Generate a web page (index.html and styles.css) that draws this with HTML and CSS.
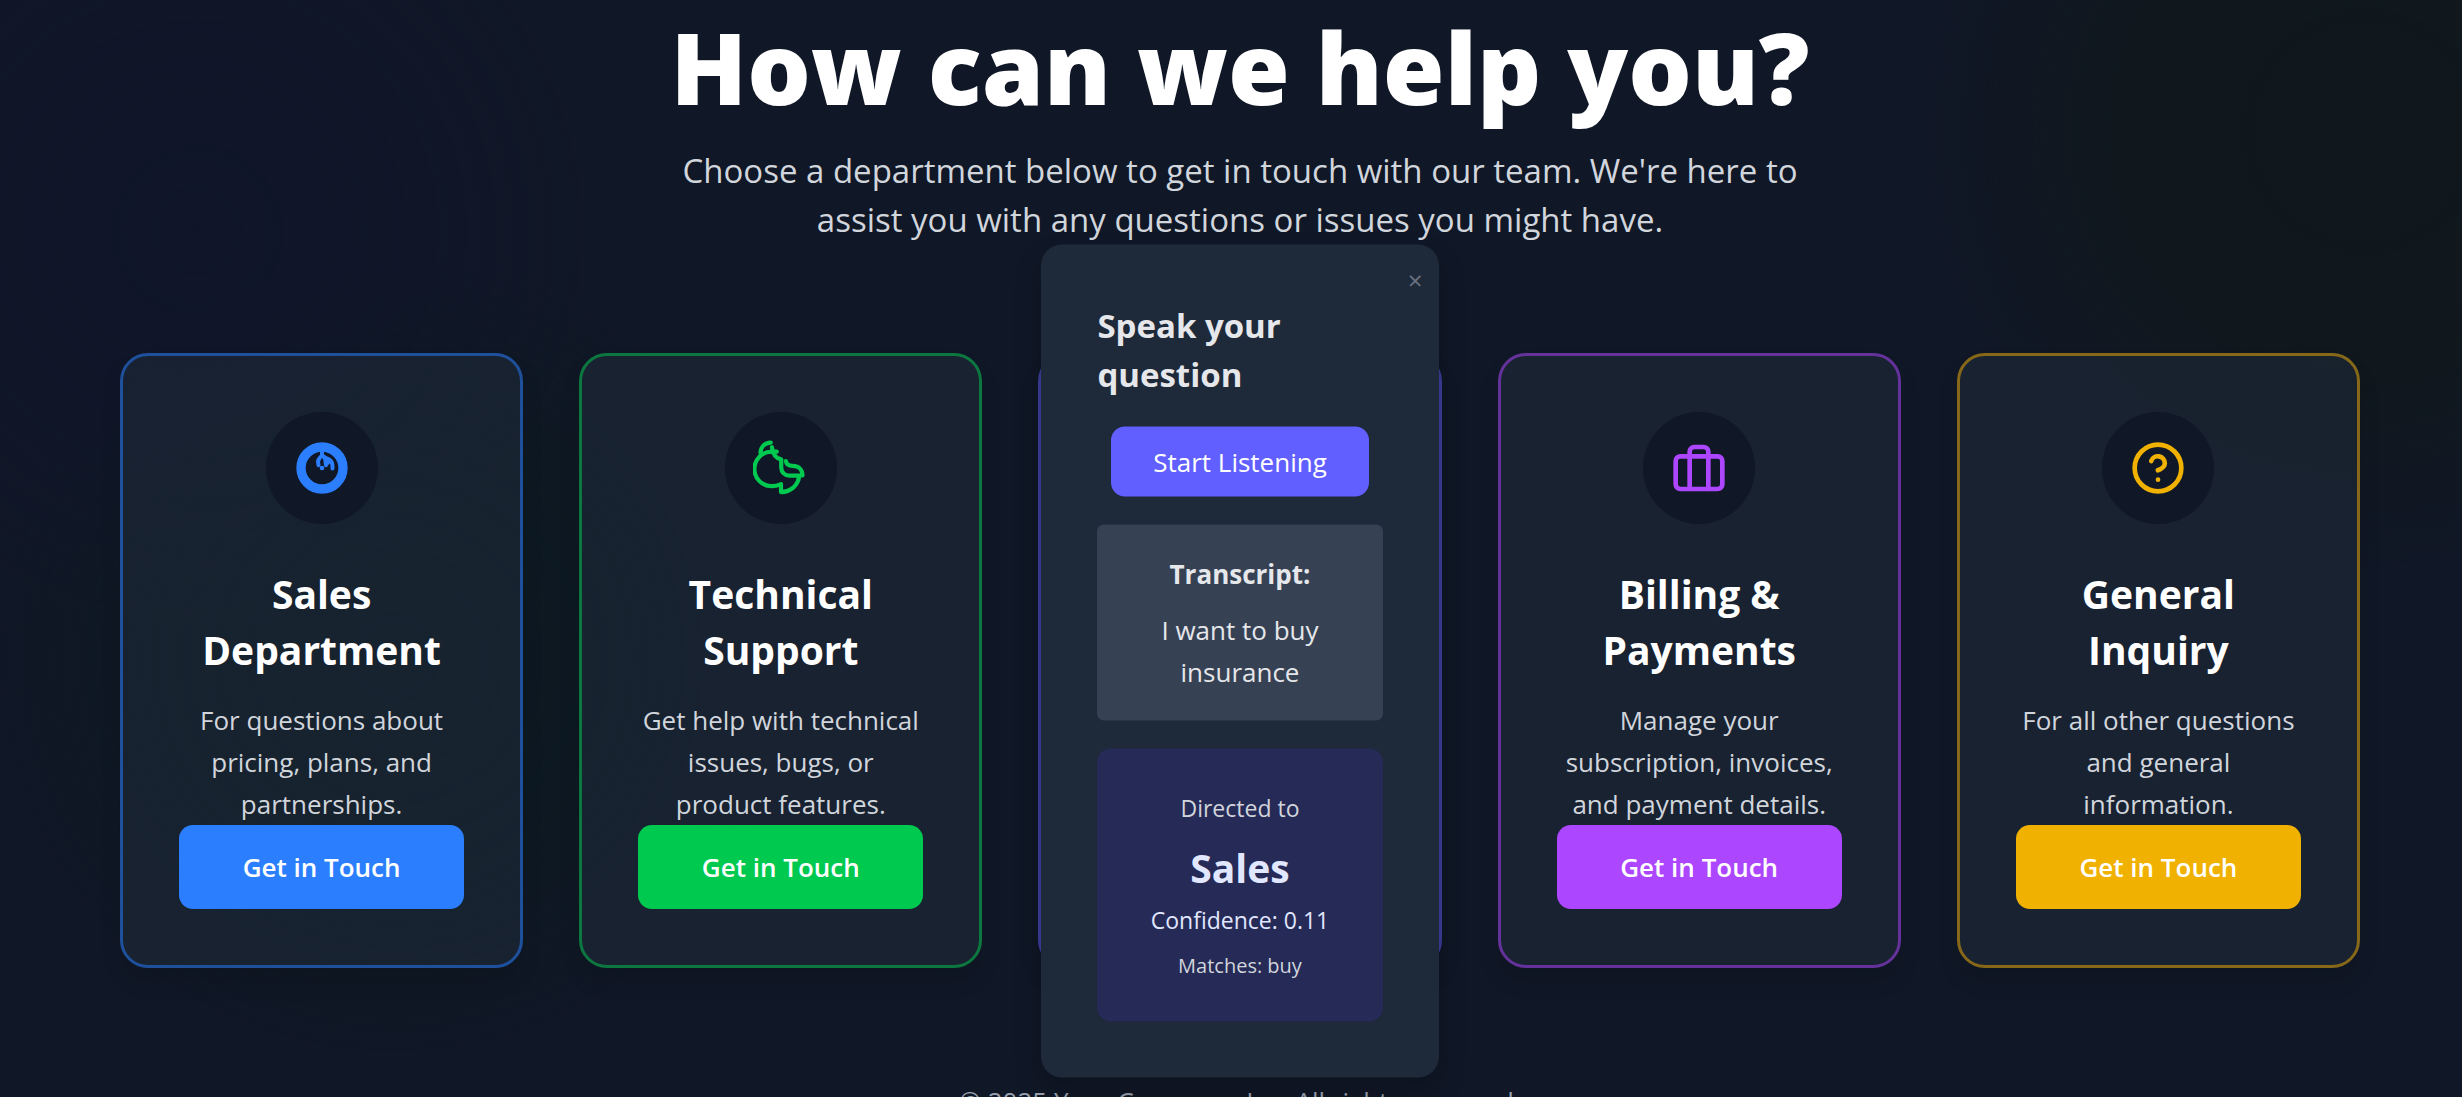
FILE: index.html
```html
<!DOCTYPE html>
<html lang="en">
<head>
<meta charset="utf-8">
<meta name="viewport" content="width=device-width, initial-scale=1">
<title>How can we help you?</title>
<link rel="stylesheet" href="styles.css">
</head>
<body>
<div class="page">
  <header class="intro">
    <h1 class="intro-title">How can we help you?</h1>
    <p class="intro-text">Choose a department below to get in touch with our team. We're here to assist you with any questions or issues you might have.</p>
  </header>

  <main class="cards">
    <section class="card card-blue">
      <div class="badge">
        <svg class="icon" viewBox="0 0 24 24" aria-hidden="true">
          <circle cx="12" cy="12" r="9" stroke-width="4"/>
          <path stroke-width="1.7" d="M12 5v1.6c-1 .9-1.600 1.700-1.700 2.600l.2 1.600M12 6.600c1 .6 1.600 1.600 1.500 2.600l.2 1.600M13 7.200c1.300 1.300 3.700.6 3.500 5M13.800 10.400l.8-.8"/>
          <circle class="dot" cx="12" cy="12" r="1"/>
        </svg>
      </div>
      <h2 class="card-title">Sales Department</h2>
      <p class="card-text">For questions about pricing, plans, and partnerships.</p>
      <button class="card-button" type="button">Get in Touch</button>
    </section>

    <section class="card card-green">
      <div class="badge">
        <svg class="icon" viewBox="0 0 24 24" aria-hidden="true">
          <path stroke-width="1.8" d="M7.600 1.100C5 1.200 3.200 3 3.200 5.600M10.200 5H8a7.400 7.400 0 0 0 0 14.800c1.500 0 2.600-.3 4-.9v3.400c4.200 0 7.500-3 7.800-7h-4.200c-2 0-3.500-1.500-3.500-3.500V8.300c-2-.3-3.600-2.100-4-5.200M14.100 9c.2 1.600 1.200 2.100 2.800 2.100 2.700 0 4.300 1.500 4.300 4.100"/>
        </svg>
      </div>
      <h2 class="card-title">Technical Support</h2>
      <p class="card-text">Get help with technical issues, bugs, or product features.</p>
      <button class="card-button" type="button">Get in Touch</button>
    </section>

    <section class="card card-indigo">
      <div class="dialog" role="dialog" aria-labelledby="dialog-title">
        <button class="dialog-close" type="button" aria-label="Close">×</button>
        <h2 class="dialog-title" id="dialog-title">Speak your question</h2>
        <button class="listen-button" type="button">Start Listening</button>
        <div class="transcript">
          <h3 class="transcript-title">Transcript:</h3>
          <p class="transcript-text">I want to buy insurance</p>
        </div>
        <div class="result">
          <p class="result-label">Directed to</p>
          <p class="result-name">Sales</p>
          <p class="result-score">Confidence: 0.11</p>
          <p class="result-matches">Matches: buy</p>
        </div>
      </div>
    </section>

    <section class="card card-purple">
      <div class="badge">
        <svg class="icon" viewBox="0 0 24 24" aria-hidden="true">
          <rect x="2" y="7" width="20" height="14" rx="2"/>
          <path d="M16 21V5a2 2 0 0 0-2-2h-4a2 2 0 0 0-2 2v16"/>
        </svg>
      </div>
      <h2 class="card-title">Billing &amp; Payments</h2>
      <p class="card-text">Manage your subscription, invoices, and payment details.</p>
      <button class="card-button" type="button">Get in Touch</button>
    </section>

    <section class="card card-yellow">
      <div class="badge">
        <svg class="icon" viewBox="0 0 24 24" aria-hidden="true">
          <circle cx="12" cy="12" r="10"/>
          <path d="M9.090 9a3 3 0 0 1 5.830 1c0 2-3 3-3 3M12 17h.01"/>
        </svg>
      </div>
      <h2 class="card-title">General Inquiry</h2>
      <p class="card-text">For all other questions and general information.</p>
      <button class="card-button" type="button">Get in Touch</button>
    </section>
  </main>

  <footer class="footer">© 2025 Your Company, Inc. All rights reserved.</footer>
</div>
</body>
</html>
```
FILE: styles.css
```css
* {
  box-sizing: border-box;
  margin: 0;
  padding: 0;
}

html {
  height: 100%;
  overflow: hidden;
}

body {
  min-height: 100%;
  background:
    radial-gradient(circle at 8% 21%, rgba(16, 20, 44, 0.6) 0, transparent 400px),
    radial-gradient(circle at 96% 12%, rgba(16, 24, 28, 0.9) 0, rgba(16, 24, 28, 0.8) 240px, transparent 440px),
    radial-gradient(circle at 16% 60%, rgba(12, 25, 32, 0.9) 0, rgba(12, 25, 32, 0.6) 240px, transparent 400px),
    #101726;
  color: #e5e7eb;
  font-family: "Open Sans", "Noto Sans", sans-serif;
  font-size: 26px;
  line-height: 42px;
}

button {
  border: 0;
  color: #fff;
  font: inherit;
  cursor: pointer;
}

.page {
  padding: 14px 102px 28px 120px;
}

.intro {
  display: flex;
  flex-direction: column;
  align-items: center;
  text-align: center;
}

.intro-title {
  color: #fff;
  font-size: 100px;
  font-weight: 800;
  line-height: 105px;
}

.intro-text {
  max-width: 1148px;
  margin-top: 27px;
  color: #d1d5dc;
  font-size: 33px;
  line-height: 49px;
}

.cards {
  display: grid;
  grid-template-columns: repeat(5, minmax(0, 1fr));
  gap: 56px;
  margin-top: 109px;
}

.card {
  --accent: #2b7fff;
  --edge: #1f509c;
  position: relative;
  display: flex;
  flex-direction: column;
  align-items: center;
  padding: 56px;
  border: 3px solid var(--edge);
  border-radius: 28px;
  background: rgba(30, 41, 57, 0.6);
  box-shadow: 0 14px 21px rgba(0, 0, 0, 0.1);
  text-align: center;
}

.card-green {
  --accent: #00c950;
  --edge: #0c7840;
}

.card-indigo {
  --accent: #615fff;
  --edge: #3c3c99;
}

.card-purple {
  --accent: #ad46ff;
  --edge: #65329b;
}

.card-yellow {
  --accent: #f0b100;
  --edge: #866818;
}

.badge {
  display: flex;
  align-items: center;
  justify-content: center;
  width: 112px;
  height: 112px;
  border-radius: 50%;
  background: #101726;
}

.icon {
  width: 56px;
  height: 56px;
  fill: none;
  stroke: var(--accent);
  stroke-width: 2;
  stroke-linecap: round;
  stroke-linejoin: round;
}

.dot {
  fill: var(--accent);
  stroke: none;
}

.card-title {
  margin-top: 42px;
  color: #fff;
  font-size: 39px;
  font-weight: 700;
  line-height: 56px;
}

.card-text {
  margin-top: 21px;
  color: #d1d5dc;
}

.card-button {
  width: 100%;
  margin-top: auto;
  padding: 21px;
  border-radius: 14px;
  background: var(--accent);
  font-weight: 600;
}

.dialog {
  position: absolute;
  top: 50%;
  left: 0;
  right: 0;
  display: flex;
  flex-direction: column;
  align-items: center;
  gap: 28px;
  padding: 56px;
  border-radius: 21px;
  background: #1e2939;
  box-shadow: 0 14px 28px rgba(0, 0, 0, 0.2);
  transform: translateY(-50%);
}

.dialog-close {
  position: absolute;
  top: 14px;
  right: 16px;
  background: none;
  color: #6a7282;
}

.dialog-title {
  width: 100%;
  font-size: 33px;
  font-weight: 700;
  line-height: 49px;
  text-align: left;
}

.listen-button {
  padding: 14px 42px;
  border-radius: 14px;
  background: #615fff;
}

.transcript {
  width: 100%;
  padding: 28px;
  border-radius: 7px;
  background: #364153;
}

.transcript-title {
  font-size: 26px;
  font-weight: 700;
}

.transcript-text {
  margin-top: 14px;
}

.result {
  width: 100%;
  padding: 42px 28px;
  border-radius: 14px;
  background: #262a56;
  color: #e0e7ff;
  font-size: 23px;
  line-height: 35px;
}

.result-label {
  color: #d1d5dc;
}

.result-name {
  margin-top: 14px;
  font-size: 39px;
  font-weight: 700;
  line-height: 56px;
}

.result-score {
  margin-top: 7px;
}

.result-matches {
  margin-top: 14px;
  color: #d1d5dc;
  font-size: 20px;
  line-height: 28px;
}

.footer {
  margin-top: 116px;
  color: #99a1af;
  font-size: 26px;
  line-height: 35px;
  text-align: center;
}
```
